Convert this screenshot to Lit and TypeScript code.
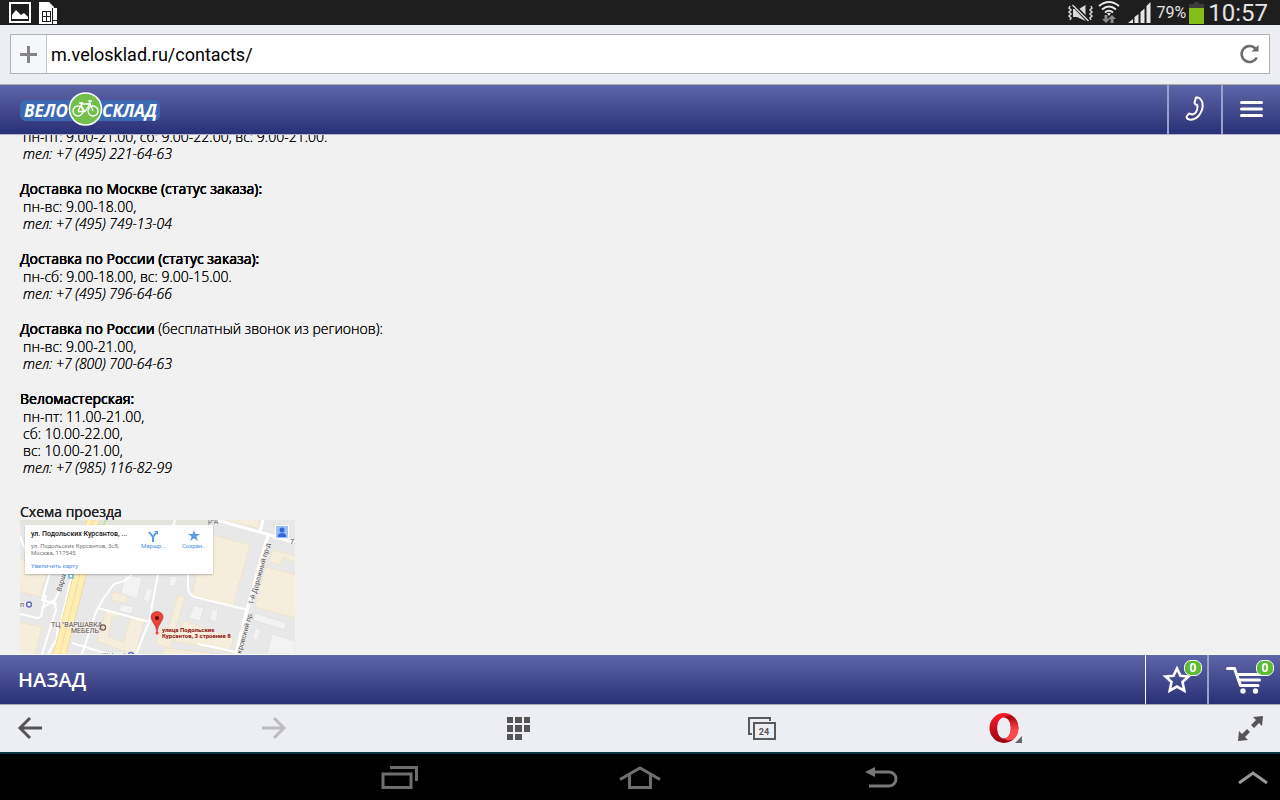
import { LitElement, html, css, svg } from "lit";
import { customElement } from "lit/decorators.js";

interface Contact {
  title: string;
  note?: string;
  hours: string[];
  phone: string;
}

const CONTACTS: Contact[] = [
  { title: "", hours: ["пн-пт: 9.00-21.00, сб: 9.00-22.00, вс: 9.00-21.00."], phone: "+7 (495) 221-64-63" },
  { title: "Доставка по Москве (статус заказа):", hours: ["пн-вс: 9.00-18.00,"], phone: "+7 (495) 749-13-04" },
  { title: "Доставка по России (статус заказа):", hours: ["пн-сб: 9.00-18.00, вс: 9.00-15.00."], phone: "+7 (495) 796-64-66" },
  { title: "Доставка по России", note: "(бесплатный звонок из регионов):", hours: ["пн-вс: 9.00-21.00,"], phone: "+7 (800) 700-64-63" },
  { title: "Веломастерская:", hours: ["пн-пт: 11.00-21.00,", "сб: 10.00-22.00,", "вс: 10.00-21.00,"], phone: "+7 (985) 116-82-99" },
];

@customElement("route-map")
export class RouteMap extends LitElement {
  static styles = css`
    :host { display: block; position: relative; max-width: 275px; font-family: Roboto, sans-serif; font-weight: 400;
      text-shadow: none; }
    .map { display: block; width: 100%; }
    .label { font: 7px Roboto, sans-serif; fill: #555; stroke: #f4f4f4; stroke-width: 1px; paint-order: stroke; }
    .place { fill: #5f4a3c; }
    .dest { font: bold 6px Roboto, sans-serif; fill: #8b0a0a; }
    .card { position: absolute; left: 5px; top: 5px; width: 188px; height: 49px; box-sizing: border-box; padding: 4px 6px;
      background: #fff; box-shadow: 0 1px 2px rgba(0, 0, 0, 0.25); display: flex; justify-content: space-between; }
    .title { font-size: 7px; line-height: 10px; font-weight: 500; color: #111; white-space: nowrap; }
    .address { font-size: 6px; line-height: 7px; color: #777; padding-top: 3px; white-space: nowrap; }
    .enlarge { display: block; font-size: 6px; line-height: 8px; margin-top: 6px; color: #4a90e2; text-decoration: none; }
    .actions { display: flex; gap: 16px; }
    .action { display: flex; flex-direction: column; align-items: center; border: 0; padding: 0; background: none;
      font: 6px Roboto, sans-serif; line-height: 8px; color: #4a90e2; height: 24px; }
    .action svg { flex: none; }
    .user { position: absolute; right: 6px; top: 5px; width: 14px; height: 14px; border: 1px solid #fff; box-sizing: border-box;
      padding: 0; background: #9cc0f7; }
    .user svg { display: block; }
  `;

  render() {
    return html`
      <svg class="map" viewBox="0 0 275 134" role="img" aria-label="Схема проезда">
        <rect width="275" height="134" fill="#e8e8e8" />
        ${this.buildings()} ${this.roads()} ${this.labels()}
      </svg>
      <div class="card">
        <div>
          <div class="title">ул. Подольских Курсантов, ...</div>
          <div class="address">ул. Подольских Курсантов, 3с8,<br />Москва, 117545</div>
          <a class="enlarge" href="#map">Увеличить карту</a>
        </div>
        <div class="actions">
          <button class="action">
            <svg width="12" height="13" viewBox="0 0 12 13" fill="none" stroke="#5a98e6" stroke-width="2">
              <path d="M6 13V8L2 3M6 8L9 4" /><path d="M7 2h4v4z" fill="#5a98e6" stroke="none" />
            </svg>Маршр...
          </button>
          <button class="action">
            <svg width="12" height="13" viewBox="0 0 12 13">
              <path d="M6 1l1.400 4H12L8.400 7.500 9.800 12 6 9.300 2.200 12 3.600 7.500 0 5h4.600z" fill="#5a98e6" />
            </svg>Сохран...
          </button>
        </div>
      </div>
      <button class="user" aria-label="Войти">
        <svg width="12" height="12" viewBox="0 0 12 12" fill="#3467d6"><circle cx="6" cy="4" r="2.500" /><path d="M2 11V9q1-2 4-2t4 2v2z" /></svg>
      </button>
    `;
  }

  private buildings() {
    return svg`
      <rect width="193" height="6" fill="#e3e4dc" />
      <g fill="#f6eedd" stroke="#f0dfc0" stroke-width=".7">
        <path d="M-1 38L27 52 20 77-1 71z" />
        <path d="M-1 102L22 107 15 135H-1z" />
        <path d="M193 15L230 25 213 86 172 75 186 15z" />
        <path d="M200 -1H240L237 8z" />
        <path d="M245 47L276 55V98L235 87z" />
        <path d="M252 30L276 36V43L263 37 260 45 250 42z" />
        <path d="M93 72L108 75 106 83 91 80z" />
        <path d="M86 90L98 93 97 98 92 97 88 117 104 122 107 109 111 98 124 101 115 135 77 121z" />
        <path d="M158 75L165 77 150 128 136 124 141 108 148 109z" />
        <path d="M164 101L214 118 209 132 152 120z" />
        <path d="M145 128L205 135H142z" />
      </g>
      <g fill="#f3f3f3" stroke="#dedede" stroke-width=".6">
        <path d="M105 55L122 58 117 79 101 73z" /><path d="M101 84L114 87 111 94 99 91z" />
        <path d="M127 68L133 70 129 82 123 80z" /><path d="M174 85L184 88 180 101 169 98 172 90z" />
        <path d="M192 89L198 91 196 102 190 100z" /><path d="M235 93L266 103 265 110 233 100z" />
        <path d="M236 108L241 110 237 120 232 118z" /><path d="M252 114L275 121V134H247z" />
        <path d="M151 56L158 57 155 66 149 65z" />
      </g>`;
  }

  private roads() {
    return svg`
      <g fill="none" stroke="#fff" stroke-width="2" stroke-linejoin="round">
        <path d="M155 0L138 54 129 102 116 134" />
        <path d="M112 54Q108 61 94 64L83 79 76 92 62 134" />
        <path d="M78 88L129 102" />
        <path d="M168 54V68Q169 75 175 77L228 90" />
        <path d="M197 0L250 15 275 23M243 0L240 12" stroke-width="3" />
        <path d="M248 15L227 90 216 134" stroke-width="3.500" />
        <path d="M52 123L88 134M178 124L216 132" />
        <path d="M47 54L34 82 36 90 22 134M22 88L34 80" />
        <path d="M0 94L17 98Q22 98 22 91L26 76 22 75M30 52L22 80 37 84" />
        <path d="M38 103L35 134M0 16Q8 40 20 47M52 54L38 116 28 134" />
      </g>
      <path d="M73 0L59 58 39 137" fill="none" stroke="#f4d58c" stroke-width="13" />
      <path d="M73 0L59 58 39 137" fill="none" stroke="#fdeeb4" stroke-width="11.500" />
      <path d="M73 0L59 58 39 137" fill="none" stroke="#f7db92" stroke-width="1" />
      <path d="M86 0L82 8" stroke="#b8e08c" stroke-width="1.500" />`;
  }

  private labels() {
    return svg`
      <text class="label" transform="translate(41 72) rotate(-74)">Варша</text>
      <rect x="49" y="54" width="4" height="4" fill="#fff" stroke="#2f9fd8" stroke-width="1" />
      <text class="label place" x="0" y="87">п</text>
      <circle cx="9" cy="84.500" r="2.400" fill="#fff" stroke="#5c6fd6" stroke-width="1.500" />
      <text class="label place" x="31" y="107">ТЦ "ВАРШАВКА</text>
      <text class="label place" x="51" y="113">МЕБЕЛЬ"</text>
      <circle cx="83" cy="107.500" r="2.600" fill="#e8dcd4" stroke="#725848" stroke-width="1.200" />
      <text class="label" x="82" y="138">Webasto</text>
      <circle cx="111" cy="135" r="2.500" fill="#fff" stroke="#5c6fd6" stroke-width="1.500" />
      <text class="label" transform="translate(233 85) rotate(-74)">1-й Дорожный пр-д</text>
      <text class="label" transform="translate(221 134) rotate(-74)">кровский пр.</text>
      <text class="label" x="188" y="3">р-д</text>
      <text class="label" x="270" y="24">7.</text>
      <path d="M137 112Q136 106 133 102 131 99 131 97A6 5.500 0 0 1 143 97Q143 99 141 102 138 106 137 112z" fill="#ea4335" stroke="#b3271d" stroke-width=".6" />
      <circle cx="137" cy="98" r="2" fill="#5b0f0b" />
      <circle cx="137" cy="113" r="1.500" fill="#ea4335" />
      <text class="dest" x="142" y="112">улица Подольских</text>
      <text class="dest" x="142" y="118">Курсантов, 3 строение 8</text>`;
  }
}

@customElement("app-root")
export class AppRoot extends LitElement {
  static styles = css`
    :host { display: flex; flex-direction: column; height: 100vh; overflow: hidden; background: #f1f1f1;
      font-family: "Open Sans", "Noto Sans", sans-serif; color: #000; }
    svg { display: block; flex: none; overflow: visible; }
    button { border: 0; padding: 0; margin: 0; background: none; font: inherit; color: inherit; display: flex;
      align-items: center; justify-content: center; }

    .status { flex: none; height: 25px; display: flex; align-items: center; justify-content: space-between; background: #1e1e1e;
      color: #e4e4e4; padding: 0 12px 0 9px; font-family: Roboto, sans-serif; }
    .left { display: flex; gap: 8px; }
    .right { display: flex; align-items: center; gap: 6px; }
    .power { display: flex; align-items: center; gap: 3px; font-size: 16px; }
    .time { display: flex; align-items: center; gap: 4px; }
    .clock { font-size: 24px; line-height: 24px; }

    .browser { flex: none; padding: 9px 10px 10px; background: #edeef3; border-bottom: 1px solid #adadad; }
    .address { display: flex; height: 40px; box-sizing: border-box; border: 1px solid #b2b2b2; background: #fff; }
    .add { width: 36px; background: #f6f7fa; border-right: 1px solid #c4c4c8; }
    .url { flex: 1; min-width: 0; border: 0; outline: 0; padding: 0 4px; font: 18px Roboto, sans-serif; color: #000; background: none; }
    .reload { width: 40px; }

    .bar { flex: none; display: flex; justify-content: space-between; height: 49px; color: #fff;
      background: linear-gradient(#5e66a8, #293076); }
    .top { border-bottom: 1px solid #b4b4d2; z-index: 1; }
    .top .tool { padding-bottom: 2px; }
    .logo { display: flex; align-items: center; padding: 0 0 2px 20px; text-decoration: none; }
    .logo-word { font: italic bold 17px "Open Sans", sans-serif; fill: #fff; }
    .tools { display: flex; }
    .tool { position: relative; border-left: 2px solid #9c9fcb; box-sizing: border-box; }
    .phone { width: 54px; }
    .menu { width: 59px; }
    .fav { width: 62px; border-left: 1px solid #fff; }
    .cart { width: 73px; padding-right: 2px; }
    .badge { position: absolute; top: 5px; right: 6px; min-width: 18px; height: 16px; box-sizing: border-box; border: 1px solid #fff;
      border-radius: 7px; background: #5bbb33; font: bold 12px "Open Sans", sans-serif; line-height: 14px; }
    .fav .badge { right: 5px; }
    .back { padding-left: 18px; font-size: 20px; font-weight: 600; }

    .page { flex: 1; min-height: 0; overflow: hidden; padding: 0 20px; font-size: 14px; font-weight: 300;
      text-shadow: 0 0 0 #000; border-bottom: 1px solid #fafafa; }
    .contacts { margin-top: -7px; }
    .contact { margin: 0 0 18px; }
    .name { margin: 0; font-size: 14px; line-height: 18px; font-weight: 500; text-shadow: 0 0 0 #000, 0 0 0 #000, 0 0 0 #000; }
    .note { font-weight: 300; text-shadow: 0 0 0 #000; }
    .hours { margin: 0; padding-left: 3px; line-height: 17px; }
    .tel { display: block; padding-left: 3px; line-height: 17px; font-style: italic; color: inherit; text-decoration: none; }
    .scheme { margin: 27px 0 0; font-size: 14px; line-height: 17px; font-weight: 500; color: #222; }

    .opera { flex: none; display: flex; justify-content: space-between; height: 46px; padding: 0 18px 1px; background: #edeef3;
      border-top: 1px solid #a8a8ae; border-bottom: 2px solid #0b3440; }
    .opera button { width: 24px; }
    .count { font: bold 9px Roboto, sans-serif; fill: #555; }
    .system { flex: none; display: grid; grid-template-columns: 1fr auto 1fr; height: 46px; background: #000; padding: 0 12px; }
    .keys { grid-column: 2; display: flex; gap: 201px; }
    .keys button { width: 40px; }
    .up { justify-self: end; }
  `;

  render() {
    return html`
      ${this.statusBar()}
      <div class="browser">
        <div class="address">
          <button class="add" aria-label="Добавить">
            <svg width="17" height="17" viewBox="0 0 17 17" stroke="#858585" stroke-width="3"><path d="M8.500 0V17M0 8.500H17" /></svg>
          </button>
          <input class="url" aria-label="Адрес" value="m.velosklad.ru/contacts/" />
          <button class="reload" aria-label="Обновить">
            <svg width="20" height="20" viewBox="0 0 20 20"><path d="M16.500 4.500A8 8 0 1 0 17.800 13.500" fill="none" stroke="#6c6c6c" stroke-width="2.600" /><path d="M12.500 7.500H19.500V1z" fill="#6c6c6c" /></svg>
          </button>
        </div>
      </div>
      <header class="bar top">
        <a class="logo" href="#home" aria-label="Велосклад">${this.logo()}</a>
        <div class="tools">
          <button class="tool phone" aria-label="Позвонить">
            <svg width="20" height="26" viewBox="0 0 20 26" fill="none" stroke="#fff" stroke-width="2" stroke-linejoin="round">
              <path d="M11 1.500Q15 .8 17 5.500 19 11 15.500 17 12 23.500 5.500 23.700 1.500 23.500 1.600 20.500L4 17.500 7.500 18.500Q12 17.500 12.500 11L12.200 9Q9.600 8.500 9.500 6.500z" />
            </svg>
          </button>
          <button class="tool menu" aria-label="Меню">
            <svg width="23" height="16" viewBox="0 0 23 16" stroke="#fff" stroke-width="3" stroke-linecap="round"><path d="M1.500 1.500H21.500M1.500 8H21.500M1.500 14.500H21.500" /></svg>
          </button>
        </div>
      </header>
      <main class="page">
        <div class="contacts">
          ${CONTACTS.map(
            (c) => html`<section class="contact">
              ${c.title ? html`<h2 class="name">${c.title}${c.note ? html` <span class="note">${c.note}</span>` : ""}</h2>` : ""}
              ${c.hours.map((h) => html`<p class="hours">${h}</p>`)}
              <a class="tel" href="tel:${c.phone.replace(/[^+\d]/g, "")}">тел: ${c.phone}</a>
            </section>`
          )}
        </div>
        <h2 class="scheme">Схема проезда</h2>
        <route-map></route-map>
      </main>
      <footer class="bar">
        <button class="back">НАЗАД</button>
        <div class="tools">
          <button class="tool fav" aria-label="Избранное">
            <svg width="28" height="27" viewBox="0 0 28 27"><path d="M14 2.500L17.500 9.800 25.500 10.500 19.500 16 21.300 24.600 14 20.500 6.700 24.600 8.500 16 2.500 10.500 10.500 9.800z" fill="none" stroke="#fff" stroke-width="2.600" /></svg>
            <span class="badge">0</span>
          </button>
          <button class="tool cart" aria-label="Корзина">
            <svg width="36" height="28" viewBox="0 0 36 28" fill="none" stroke="#fff" stroke-width="3" stroke-linecap="round" stroke-linejoin="round">
              <path d="M1.500 2.500H8.500L14.500 19.500H32M12 8.500H34.500M13 14H33.500" /><g fill="#fff" stroke="none"><circle cx="17" cy="25" r="2.700" /><circle cx="29.500" cy="25" r="2.700" /></g>
            </svg>
            <span class="badge">0</span>
          </button>
        </div>
      </footer>
      ${this.operaBar()} ${this.systemBar()}
    `;
  }

  private statusBar() {
    return html`<div class="status">
      <div class="left">
        <svg width="22" height="21" viewBox="0 0 22 21"><rect x="1" y="1" width="20" height="19" fill="none" stroke="#fff" stroke-width="2" /><path d="M3 17V13L7 8 12 13 15 11 19 15V17z" fill="#fff" /></svg>
        <svg width="18" height="22" viewBox="0 0 18 22"><path d="M0 0H10L15 5V6H18V22H0z" fill="#fff" /><path d="M3 9.500H12M3 14.500H12M3 19.500H12M3.500 9V20M7.500 9V20M11.500 9V20M13.500 6V22M14 18.500H18" stroke="#1e1e1e" fill="none" /></svg>
      </div>
      <div class="right">
        <svg width="25" height="18" viewBox="0 0 25 18" fill="none" stroke="#d8d8d8" stroke-width="1.500">
          <path d="M2 2l-1 2 2 2-2 2 2 2-2 2 2 2-1 2M23 2l1 2-2 2 2 2-2 2 2 2-2 2 1 2" /><path d="M5 5V13H9L17.500 17V1L11 5z" fill="#d8d8d8" stroke="none" /><path d="M4.500 0L20.500 17" stroke="#1e1e1e" stroke-width="4" /><path d="M4.500 1L20.500 17" />
        </svg>
        <svg width="20" height="23" viewBox="0 0 20 23"><g fill="none" stroke="#e8e8e8" stroke-width="2"><path d="M0 5Q10-3 20 5M3 8.500Q10 2.500 17 8.500M6 11.500Q10 8 14 11.500" /></g><path d="M8 12h4l-2 3z" fill="#e8e8e8" /><path d="M5.500 14H8.500V18H11L7 22 3 18H5.500zM11.500 22H14.500V18H17L13 14 9 18H11.500z" fill="#8b8b8b" /></svg>
        <svg width="26" height="21" viewBox="-2 0 26 21" fill="#e6e6e6"><path d="M1 21L6 17V21zM7.500 21V15L11.500 12V21zM13.500 21V10L17.500 6.500V21zM19.500 21V4L23.500 0V21z" /></svg>
        <div class="time">
          <div class="power"><span>79%</span><svg width="15" height="22" viewBox="0 0 15 22"><path d="M5 0H10V2H15V22H0V2H5z" fill="#3c3c3c" /><path d="M0 6H15V22H0z" fill="#83bd17" /></svg></div>
          <span class="clock">10:57</span>
        </div>
      </div>
    </div>`;
  }

  private logo() {
    return html`<svg width="140" height="34" viewBox="0 0 140 34">
      <rect y="8" width="140" height="21" rx="6" fill="#3d68b2" />
      <text class="logo-word" x="4" y="25">ВЕЛО</text>
      <text class="logo-word" x="82" y="25">СКЛАД</text>
      <circle cx="65.500" cy="17" r="16" fill="#72c04b" stroke="#fff" stroke-width="1.600" />
      <g fill="none" stroke="#fff" stroke-width="1.300">
        <circle cx="58" cy="19" r="5" /><circle cx="73" cy="19" r="5" />
        <path d="M58 19L61.500 12 70 12 65 19.500H58M61 13L65 19.500M73 19L69 9H72M59 11H63" />
      </g>
    </svg>`;
  }

  private operaBar() {
    return html`<nav class="opera">
      <button aria-label="Назад"><svg width="24" height="22" viewBox="0 0 24 22" fill="none" stroke="#555" stroke-width="3"><path d="M2 11H24M12 1L2 11 12 21" /></svg></button>
      <button aria-label="Вперёд" disabled><svg width="24" height="22" viewBox="0 0 24 22" fill="none" stroke="#bcbcc0" stroke-width="3"><path d="M22 11H0M12 1L22 11 12 21" /></svg></button>
      <button aria-label="Экспресс-панель"><svg width="23" height="23" viewBox="0 0 23 23" fill="#555"><path d="M0 0h6v6H0zM8 0h7v6H8zM17 0h6v6h-6zM0 8h6v7H0zM8 8h7v7H8zM17 8h6v7h-6zM0 17h6v6H0zM8 17h7v6H8z" /></svg></button>
      <button aria-label="Вкладки"><svg width="28" height="23" viewBox="0 0 28 23" fill="none" stroke="#5a5a5a" stroke-width="2"><path d="M4 17H1V1H22V4" /><rect x="6" y="6" width="21" height="16" /><text class="count" x="16" y="18" text-anchor="middle" stroke="none">24</text></svg></button>
      <button aria-label="Opera"><svg width="32" height="30" viewBox="0 0 32 30">
        <defs><linearGradient id="a" x1="0" y1="0" x2="0" y2="1"><stop offset="0" stop-color="#ff1b2d" /><stop offset="1" stop-color="#980010" /></linearGradient>
        <linearGradient id="b" x1="0" y1="0" x2="0" y2="1"><stop offset="0" stop-color="#a00010" /><stop offset=".6" stop-color="#ff4a4a" /><stop offset="1" stop-color="#ff4a4a" /></linearGradient></defs>
        <path d="M14 0A14.500 15 0 0 1 14 30A14.500 15 0 0 1 14 0zM14 4.500C5 4.500 5 25.500 14 25.500S23 4.500 14 4.500z" fill="url(#a)" fill-rule="evenodd" />
        <path d="M14 4.500Q20 .5 25 5Q28.500 9 28.500 15T25 25Q20 29.500 14 25.500C23 25.500 23 4.500 14 4.500z" fill="url(#b)" /><path d="M32 23V30H25z" fill="#666" />
      </svg></button>
      <button aria-label="На весь экран"><svg width="25" height="25" viewBox="0 0 25 25" fill="#555"><path d="M15 1L25 0 24 10 21 7 16 12 13 9 18 4zM0 25L1 15 4 18 9 13 12 16 7 21 10 24z" /></svg></button>
    </nav>`;
  }

  private systemBar() {
    return html`<nav class="system">
      <div class="keys">
        <button aria-label="Недавние"><svg width="37" height="23" viewBox="0 0 37 23" fill="none" stroke="#6e6e6e" stroke-width="3"><path d="M9 1.500H35.500V15" /><rect x="2" y="8" width="28" height="13.500" /></svg></button>
        <button aria-label="Домой"><svg width="42" height="23" viewBox="0 0 42 23" fill="none" stroke="#6e6e6e" stroke-width="3"><path d="M1 13.500L21 2 41 13.500M10.500 9V21.500H31.500V9" /></svg></button>
        <button aria-label="Назад"><svg width="32" height="21" viewBox="0 0 32 21"><path d="M7 5H24A7 7 0 0 1 24 19H4" fill="none" stroke="#777" stroke-width="3" /><path d="M0 5L10 0V10z" fill="#777" /></svg></button>
      </div>
      <button class="up" aria-label="Развернуть"><svg width="30" height="13" viewBox="0 0 30 13" fill="none" stroke="#999" stroke-width="3"><path d="M1 12L15 2 29 12" /></svg></button>
    </nav>`;
  }
}
